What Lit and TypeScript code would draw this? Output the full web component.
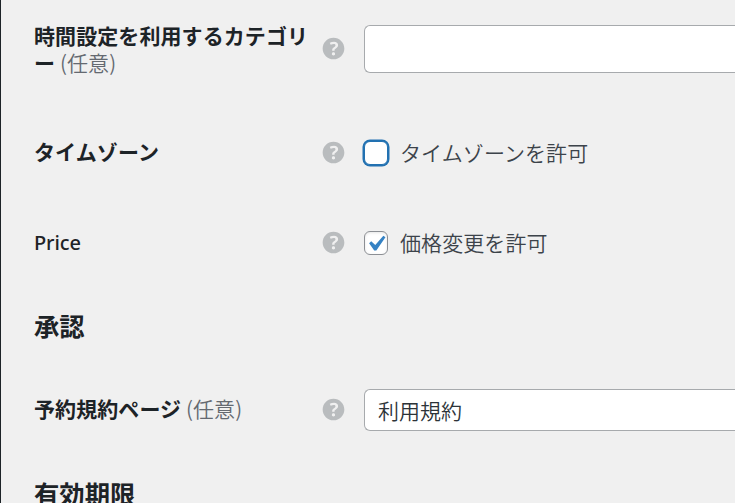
import { LitElement, html, css, svg, nothing } from "lit";
import { customElement, property } from "lit/decorators.js";

@customElement("help-tip")
class HelpTip extends LitElement {
  static styles = css`
    :host { display: block; width: 31px; height: 31px; margin-left: -1px; color: #b9bcbe; }
    svg { display: block; width: 31px; height: 31px; }
  `;
  render() {
    return html`<svg viewBox="0 0 20 20" fill="currentColor">
      <path d="M17 10c0-3.87-3.14-7-7-7-3.87 0-7 3.13-7 7s3.13 7 7 7c3.86 0 7-3.13 7-7zm-6.3 1.48H9.14v-.43c0-.38.08-.7.24-.98s.46-.57.88-.89c.41-.29.68-.53.81-.71.14-.18.2-.39.2-.62 0-.25-.09-.44-.28-.58-.19-.13-.45-.19-.79-.19-.58 0-1.25.19-2 .57l-.64-1.28c.87-.49 1.8-.74 2.77-.74.81 0 1.45.2 1.92.58.48.39.71.91.71 1.55 0 .43-.09.8-.29 1.11-.19.32-.57.67-1.11 1.06-.38.28-.61.49-.71.63-.1.15-.15.34-.15.57v.35zm-1.47 2.74c-.18-.17-.27-.42-.27-.73 0-.33.08-.58.26-.75s.43-.25.77-.25c.32 0 .57.09.75.26s.27.42.27.74c0 .3-.09.55-.27.72-.18.18-.43.27-.75.27-.33 0-.58-.09-.76-.26z"/>
    </svg>`;
  }
}

@customElement("check-field")
class CheckField extends LitElement {
  @property() label = "";
  @property({ type: Boolean }) checked = false;
  @property({ type: Boolean }) focused = false;

  static styles = css`
    :host { display: flex; align-items: center; gap: 12px; height: 32px; color: #3c434a; }
    .box {
      box-sizing: border-box; flex: none; display: flex;
      width: 24px; height: 24px; border: 1px solid #8c8f94; border-radius: 6px;
      background: #fff; box-shadow: inset 0 1px 3px rgba(0, 0, 0, 0.1);
    }
    .focused { border-color: #2271b1; box-shadow: 0 0 0 1.5px #2271b1; }
    .mark { flex: none; width: 31.5px; height: 31.5px; margin: -4px 0 0 -5px; fill: #3582c4; }
    .text { line-height: 32px; margin-top: -3px; font-weight: 350; white-space: nowrap; letter-spacing: 0.08px; }
  `;
  render() {
    return html`
      <span class="box ${this.focused ? "focused" : ""}">
        ${this.checked
          ? html`<svg class="mark" viewBox="0 0 20 20">${svg`<path d="M14.83 4.89l1.34.94-5.81 8.38H9.02L5.78 9.67l1.34-1.25 2.57 2.4z"/>`}</svg>`
          : nothing}
      </span>
      <span class="text">${this.label}</span>`;
  }
}

@customElement("app-root")
class AppRoot extends LitElement {
  static styles = css`
    :host {
      display: block; box-sizing: border-box; width: 735px; height: 503px; overflow: hidden;
      background: #f0f0f0; border-left: 1px solid #1d2327; padding-left: 33px;
      font: 21px/27px "Noto Sans CJK JP", "Noto Sans", sans-serif; color: #1d2327;
    }
    .row { display: grid; grid-template-columns: 285px 45px 1fr; align-items: start; }
    .categories { height: 137px; padding-top: 21px; box-sizing: border-box; }
    .zone { height: 90px; }
    .price { height: 83px; }
    .terms { height: 84px; }
    .label { font-weight: 700; white-space: nowrap; letter-spacing: 0.08px; }
    .latin { font-family: "Noto Sans", sans-serif; font-weight: 500; font-size: 20px; letter-spacing: -0.1px; }
    .optional { font-weight: 350; color: #646970; }
    .categories .label { margin-top: 1px; }
    .categories help-tip { margin-top: 12px; }
    .categories .field { margin-top: 4px; }
    .zone .label { margin-top: 1px; }
    .price .label { margin-top: 2px; }
    .terms .label { margin-top: 1px; }
    .field {
      box-sizing: border-box; border: 1px solid #a7aaad; border-right: 0;
      border-radius: 6px 0 0 6px; background: #fff; height: 48px;
    }
    .select { height: 42px; margin-top: -5px; padding: 0 13px; line-height: 40px; font-weight: 350; color: #2c3338; }
    h2 { margin: 0; height: 84px; font-size: 25.35px; line-height: 30px; font-weight: 700; }
  `;
  render() {
    return html`
      <div class="row categories">
        <div class="label">時間設定を利用するカテゴリ<br>ー <span class="optional">(任意)</span></div>
        <help-tip></help-tip>
        <div class="field"></div>
      </div>
      <div class="row zone">
        <div class="label">タイムゾーン</div>
        <help-tip></help-tip>
        <check-field label="タイムゾーンを許可" focused></check-field>
      </div>
      <div class="row price">
        <div class="label latin">Price</div>
        <help-tip></help-tip>
        <check-field label="価格変更を許可" checked></check-field>
      </div>
      <h2>承認</h2>
      <div class="row terms">
        <div class="label">予約規約ページ <span class="optional">(任意)</span></div>
        <help-tip></help-tip>
        <div class="field select">利用規約</div>
      </div>
      <h2>有効期限</h2>`;
  }
}
